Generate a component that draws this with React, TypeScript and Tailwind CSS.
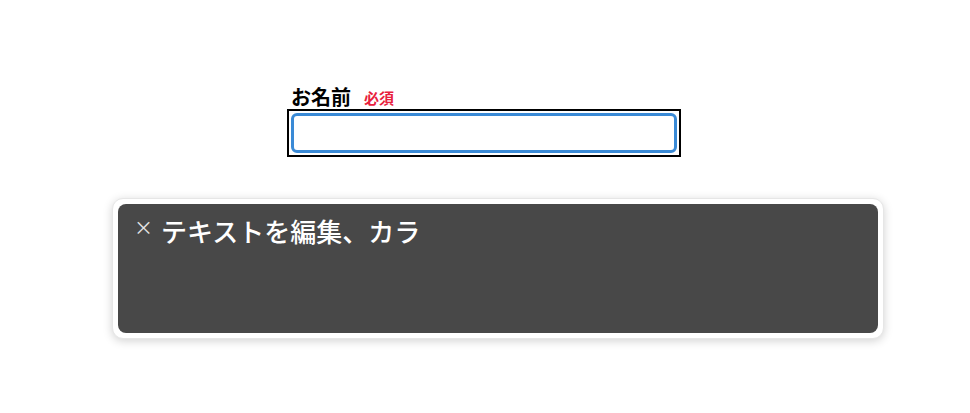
import React from "react";

export default function App() {
  return (
    <div
      className="w-[970px] h-[413px] bg-white flex flex-col items-center"
      style={{ fontFamily: '"Noto Sans CJK JP", "Noto Sans", sans-serif' }}
    >
      <div className="mt-[85px] ml-[-2px] flex flex-col w-[394px]">
        <div className="flex items-end gap-[13px] pl-[4px] h-[24px]">
          <span className="text-[20px] leading-[24px] font-bold text-black">お名前</span>
          <span className="text-[15px] leading-[22px] font-bold text-[#e8203c]">必須</span>
        </div>
        <div className="border-2 border-black p-[2px] h-[48px]">
          <div className="h-full rounded-[6px] border-[3px] border-[#3a8ad6] bg-white" />
        </div>
      </div>
      <div className="mt-[41px] ml-[26px] w-[772px] h-[141px] rounded-[11px] bg-white p-[5px] shadow-[0_2px_10px_rgba(0,0,0,0.18)] border border-[#e6e6e6]">
        <div className="h-full rounded-[8px] bg-[#484848] flex items-start pl-[16px] pt-[9px] gap-[8px]">
          <span className="text-[19px] leading-[28px] text-[#e4e4e4]">×</span>
          <span className="text-[26px] leading-[36px] font-medium text-white">テキストを編集、カラ</span>
        </div>
      </div>
    </div>
  );
}
